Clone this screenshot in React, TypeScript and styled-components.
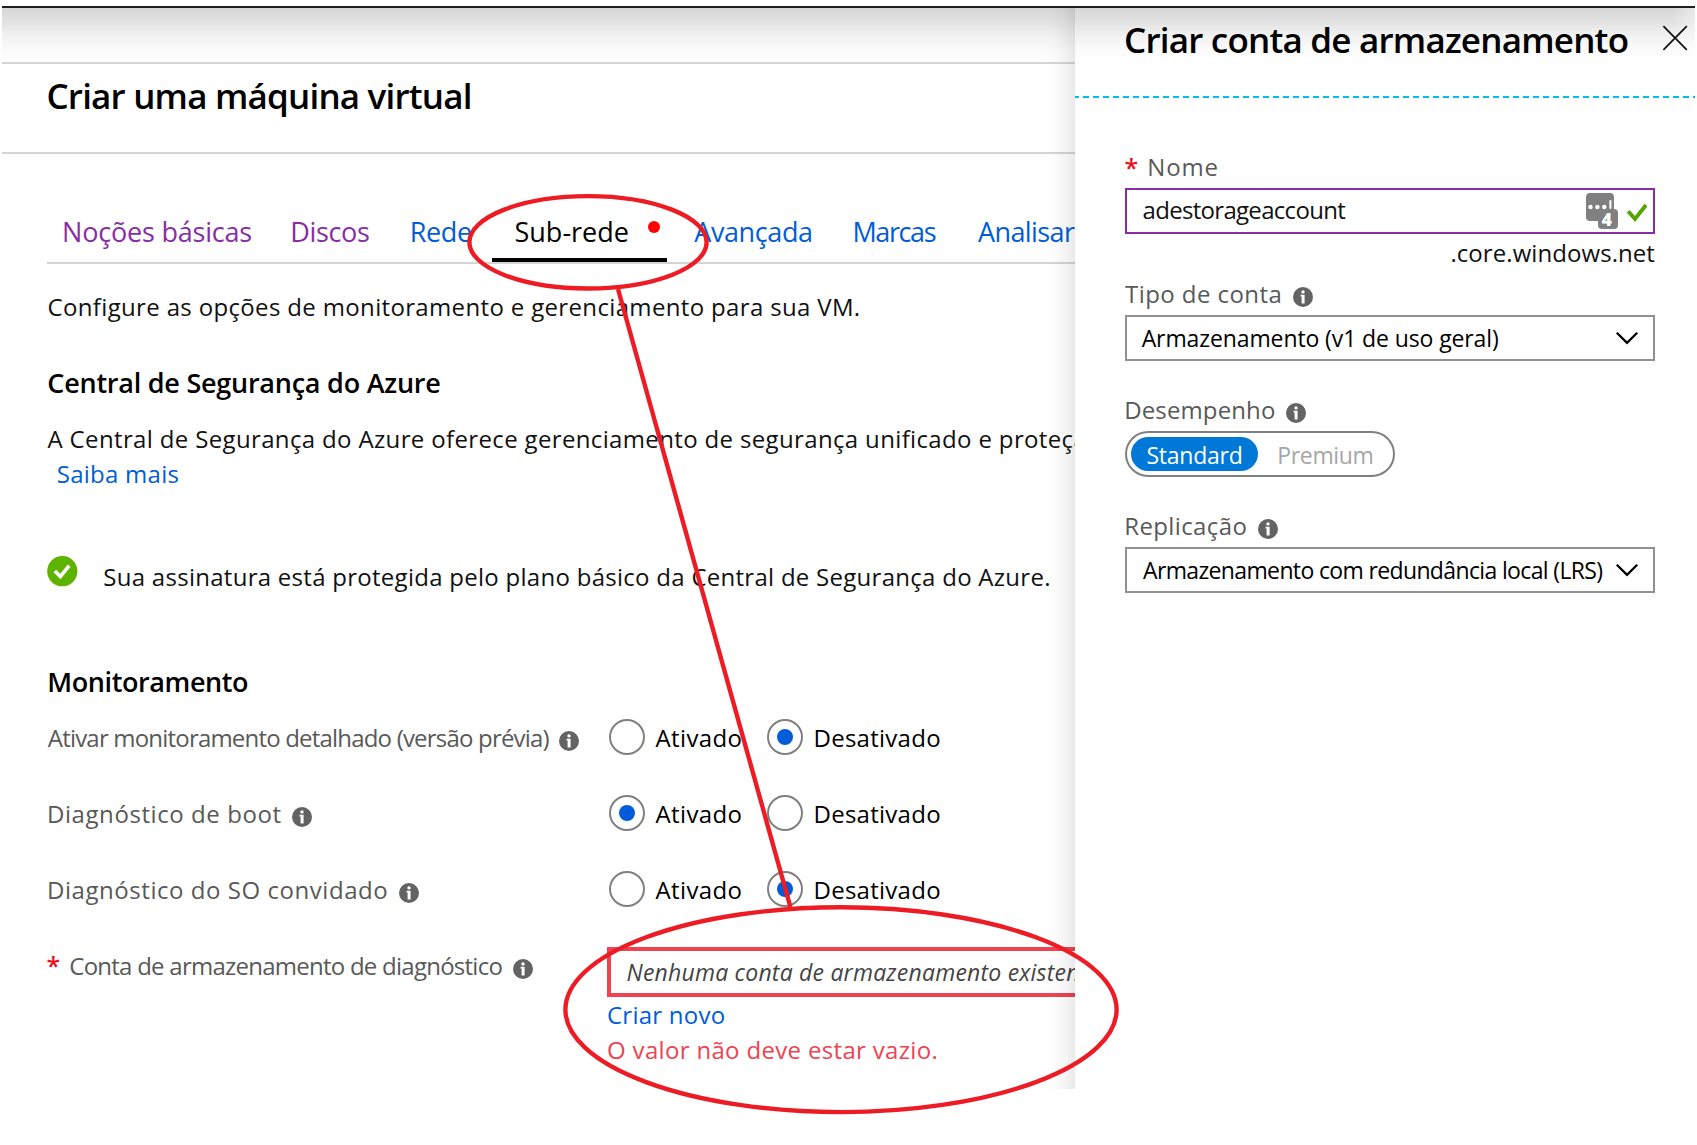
import React from 'react';
import styled, { createGlobalStyle, css } from 'styled-components';

const c = {
  ink: '#111111',
  label: '#595959',
  link: '#015cda',
  visited: '#882da5',
  rule: '#d4d4d4',
  error: '#ef4352',
  azure: '#0078d7',
  mark: '#ed1c24',
};

const GlobalStyle = createGlobalStyle`
  * { box-sizing: border-box; }
  body {
    margin: 0;
    background: #fff;
    color: ${c.ink};
    font-family: 'Open Sans', 'Noto Sans', sans-serif;
    font-size: 24px;
  }
  h1, h2, p { margin: 0; }
`;

type Tracked = { $track?: number };
const tracking = css<Tracked>`
  letter-spacing: ${(p) => p.$track ?? 0}px;
  white-space: nowrap;
`;

const Page = styled.div`
  position: relative;
  width: 1697px;
  height: 1145px;
  padding: 6px 2px 0;
  overflow: hidden;
`;

const TopLine = styled.div`
  height: 2px;
  background: #1f1f1f;
`;

const Columns = styled.div`
  display: grid;
  grid-template-columns: 1073px 620px;
  height: 1137px;
`;

const TopShade = styled.div`
  position: absolute;
  top: 8px;
  left: 2px;
  right: 2px;
  height: 54px;
  background: linear-gradient(
    rgba(0, 0, 0, 0.155),
    rgba(0, 0, 0, 0.115) 25%,
    rgba(0, 0, 0, 0.055) 50%,
    rgba(0, 0, 0, 0.015) 78%,
    rgba(0, 0, 0, 0)
  );
  mask-image: linear-gradient(to left, rgba(0, 0, 0, 0.6), #000 22px);
  pointer-events: none;
`;

const Blade = styled.main`
  position: relative;
  overflow: hidden;
`;

const BladeShade = styled.div`
  position: absolute;
  top: 0;
  right: 0;
  width: 30px;
  height: 1081px;
  background: linear-gradient(
    to left,
    rgba(0, 0, 0, 0.085),
    rgba(0, 0, 0, 0.04) 35%,
    rgba(0, 0, 0, 0.012) 70%,
    rgba(0, 0, 0, 0)
  );
`;

const Strip = styled.div`
  height: 56px;
  border-bottom: 2px solid ${c.rule};
`;

const BladeHeader = styled.header`
  height: 90px;
  padding: 8px 0 0 44.5px;
  border-bottom: 2px solid ${c.rule};
`;

const Title = styled.h1<Tracked>`
  color: #000;
  font-size: 35px;
  font-weight: 600;
  line-height: 48px;
  ${tracking}
`;

const Content = styled.div`
  width: 1300px;
  padding: 57px 0 0 45px;
`;

const Tabs = styled.nav`
  display: flex;
  height: 53px;
  border-bottom: 2px solid ${c.rule};
`;

const Tab = styled.a<Tracked & { $tone: string; $width: number; $lead: number; $active?: boolean }>`
  display: flex;
  width: ${(p) => p.$width}px;
  height: 51px;
  padding-left: ${(p) => p.$lead}px;
  border-bottom: 4px solid ${(p) => (p.$active ? '#000' : 'transparent')};
  color: ${(p) => p.$tone};
  font-size: 27px;
  line-height: 42px;
  ${tracking}
`;

const Dot = styled.span`
  width: 12px;
  height: 12px;
  margin: 10px 0 0 19px;
  border-radius: 50%;
  background: #f00;
`;

const Para = styled.p<Tracked & { $top: number }>`
  margin: ${(p) => p.$top}px 0 0 0.5px;
  line-height: 34px;
  ${tracking}
`;

const Heading = styled.h2<Tracked & { $top: number }>`
  margin: ${(p) => p.$top}px 0 0 0.3px;
  color: #000;
  font-size: 27px;
  font-weight: 600;
  line-height: 36px;
  ${tracking}
`;

const Link = styled.a<Tracked>`
  color: ${c.link};
  ${tracking}
`;

const Indent = styled.span`
  display: inline-block;
  width: 9.3px;
`;

const Status = styled.div`
  display: flex;
  gap: 25.3px;
  height: 38px;
  margin-top: 65.5px;
`;

const StatusText = styled.p<Tracked>`
  padding-top: 3.5px;
  line-height: 34px;
  ${tracking}
`;

const Settings = styled.div`
  display: flex;
  flex-direction: column;
  gap: 40px;
  margin-top: 19px;
`;

const Setting = styled.div`
  display: grid;
  grid-template-columns: 560px 1fr;
  height: 36px;
`;

const Label = styled.div<Tracked>`
  display: flex;
  color: ${c.label};
  line-height: 37px;
  ${tracking}
`;

const InfoSvg = styled.svg<{ $top: number }>`
  flex: none;
  width: 20px;
  height: 20px;
  margin: ${(p) => p.$top}px 0 0 10.6px;
`;

const Star = styled.span`
  width: 22.8px;
  margin-left: -0.5px;
  color: #e81123;
  font-size: 25px;
  font-weight: 600;
`;

const Options = styled.div`
  display: flex;
  padding-left: 2px;
`;

const Option = styled.label<Tracked>`
  display: flex;
  gap: 10.5px;
  width: 158px;
  color: #000;
  line-height: 37px;
  ${tracking}
`;

const Radio = styled.span<{ $on: boolean }>`
  display: grid;
  flex: none;
  place-items: center;
  width: 36px;
  height: 36px;
  border: 2px solid #808080;
  border-radius: 50%;
  &::after {
    content: '';
    width: 16px;
    height: 16px;
    border-radius: 50%;
    background: ${(p) => (p.$on ? c.link : 'transparent')};
  }
`;

const Account = styled.div`
  line-height: 35px;
`;

const InvalidField = styled.div<Tracked>`
  height: 50px;
  padding-left: 15.5px;
  border: 4px solid ${c.error};
  color: #444;
  font-size: 23px;
  font-style: italic;
  line-height: 42px;
  ${tracking}
`;

const ErrorText = styled.p<Tracked>`
  color: ${c.error};
  line-height: 35px;
  ${tracking}
`;

const Panel = styled.aside`
  background: #fff;
`;

const PanelHeader = styled.header`
  display: flex;
  justify-content: space-between;
  height: 90px;
  padding: 8px 7px 0 49px;
  background: repeating-linear-gradient(to right, #00bcf2 0 6px, transparent 6px 10px) -2px 88px / 630px 2px no-repeat;
`;

const CloseSvg = styled.svg`
  width: 26px;
  height: 26px;
  margin-top: 9px;
`;

const Form = styled.div`
  display: flex;
  flex-direction: column;
  padding: 52px 40px 0 50px;
`;

const Field = styled.div<{ $gap: number }>`
  height: 84px;
  margin-bottom: ${(p) => p.$gap}px;
`;

const FieldLabel = styled(Label)<{ $shift?: number }>`
  height: 38px;
  margin-left: ${(p) => p.$shift ?? 0}px;
  line-height: 34px;
`;

const Box = styled.div<Tracked & { $border: string; $lead: number }>`
  display: flex;
  align-items: center;
  height: 46px;
  padding: 0 ${(p) => p.$lead}px;
  border: 2px solid ${(p) => p.$border};
  color: #000;
  line-height: 42px;
  ${tracking}
`;

const NameBox = styled(Box)`
  padding-right: 5px;
  color: ${c.ink};
  line-height: 40px;
`;

const SelectBox = styled(Box)`
  justify-content: space-between;
  padding-right: 14.5px;
  font-size: 23px;
`;

const FillText = styled.span`
  flex: 1;
  margin-top: -2px;
`;

const Suffix = styled.p<Tracked>`
  height: 43px;
  padding-top: 2px;
  line-height: 34px;
  text-align: right;
  ${tracking}
`;

const Toggle = styled.div`
  display: flex;
  width: 270px;
  height: 46px;
  padding: 4px;
  border: 2px solid #808080;
  border-radius: 23px;
  font-size: 23px;
  line-height: 36px;
`;

const Choice = styled.span<Tracked & { $on?: boolean }>`
  width: 127px;
  height: 34px;
  padding-left: ${(p) => (p.$on ? 15.5 : 19.3)}px;
  border-radius: 17px;
  background: ${(p) => (p.$on ? c.azure : 'transparent')};
  color: ${(p) => (p.$on ? '#fff' : '#a6a6a6')};
  ${tracking}
`;

const Annotations = styled.svg`
  position: absolute;
  inset: 0;
  width: 1697px;
  height: 1145px;
  pointer-events: none;
`;

const Info = ({ top = 12 }: { top?: number }) => (
  <InfoSvg viewBox="0 0 20 20" $top={top}>
    <circle cx="10" cy="10" r="10" fill="#636363" />
    <circle cx="10" cy="4.9" r="1.7" fill="#fff" />
    <path d="M7.6 7.8H11.6V16.6H8.6V9.6H7.6Z" fill="#fff" />
  </InfoSvg>
);

const Chevron = () => (
  <svg width="24" height="14" viewBox="0 0 24 14">
    <path d="M1.8 1.8L12 11.8L22.2 1.8" fill="none" stroke="#000" strokeWidth="2.3" />
  </svg>
);

const Approved = () => (
  <svg width="31" height="31" viewBox="0 0 31 31">
    <circle cx="15.3" cy="15.2" r="15.1" fill="#5db300" />
    <path d="M7.8 15L13.3 20.6L22.2 9.6" fill="none" stroke="#fff" strokeWidth="3.6" />
  </svg>
);

const PasswordBadge = () => (
  <svg width="62" height="38" viewBox="0 0 62 38">
    <rect x="0" y="1" width="28" height="28" rx="4" fill="#808080" />
    <rect x="12" y="17" width="20" height="20" rx="4" fill="#808080" />
    <g fill="#fff">
      <circle cx="4.5" cy="15" r="2.2" />
      <circle cx="11.4" cy="15" r="2.2" />
      <circle cx="18.3" cy="15" r="2.2" />
      <rect x="23.4" y="8.2" width="2" height="8.6" />
    </g>
    <text x="21" y="34" fill="#fff" textAnchor="middle" fontSize="17.5" fontWeight="800" fontFamily="'Open Sans', sans-serif" letterSpacing="0">
      4
    </text>
    <path d="M42.2 19.2L49 27L60 13" fill="none" stroke="#57a300" strokeWidth="3.8" />
  </svg>
);

const tabs = [
  { text: 'Noções básicas', tone: c.visited, width: 228, lead: 15, track: -0.2 },
  { text: 'Discos', tone: c.visited, width: 120, lead: 15.2, track: -0.35 },
  { text: 'Rede', tone: c.link, width: 97, lead: 14.8, track: -0.4 },
  { text: 'Sub-rede', tone: '#000', width: 175, lead: 22.5, track: 0, active: true },
  { text: 'Avançada', tone: c.link, width: 159, lead: 27.2, track: -0.38 },
  { text: 'Marcas', tone: c.link, width: 125, lead: 26.5, track: -1.41 },
  { text: 'Analisar', tone: c.link, width: 150, lead: 27, track: -0.59 },
];

const settings = [
  { text: 'Ativar monitoramento detalhado (versão prévia)', track: -0.807, shift: 0.8, on: false },
  { text: 'Diagnóstico de boot', track: 0.57, shift: 0, on: true },
  { text: 'Diagnóstico do SO convidado', track: 0.55, shift: 0, on: false },
];

const Nudge = styled.span<{ $by: number }>`
  margin-left: ${(p) => p.$by}px;
`;

export default function App() {
  return (
    <>
      <GlobalStyle />
      <Page>
        <TopLine />
        <Columns>
          <Blade>
            <Strip />
            <BladeHeader>
              <Title $track={-0.81}>Criar uma máquina virtual</Title>
            </BladeHeader>
            <Content>
              <Tabs>
                {tabs.map((t) => (
                  <Tab key={t.text} $tone={t.tone} $width={t.width} $lead={t.lead} $track={t.track} $active={t.active}>
                    {t.text}
                    {t.active && <Dot />}
                  </Tab>
                ))}
              </Tabs>
              <Para $top={25.5} $track={0.345}>
                Configure as opções de monitoramento e gerenciamento para sua VM.
              </Para>
              <Heading $top={41} $track={-0.24}>Central de Segurança do Azure</Heading>
              <Para $top={21} $track={0.353}>
                A Central de Segurança do Azure oferece gerenciamento de segurança unificado e proteção
              </Para>
              <Para $top={1}>
                <Indent />
                <Link $track={0.25}>Saiba mais</Link>
              </Para>
              <Status>
                <Approved />
                <StatusText $track={0.275}>
                  Sua assinatura está protegida pelo plano básico da Central de Segurança do Azure.
                </StatusText>
              </Status>
              <Heading $top={70} $track={-0.41}>Monitoramento</Heading>
              <Settings>
                {settings.map((s) => (
                  <Setting key={s.text}>
                    <Label $track={s.track}>
                      <Nudge $by={s.shift}>{s.text}</Nudge>
                      <Info />
                    </Label>
                    <Options>
                      <Option $track={0.367}>
                        <Radio $on={s.on} />
                        Ativado
                      </Option>
                      <Option $track={0.26}>
                        <Radio $on={!s.on} />
                        Desativado
                      </Option>
                    </Options>
                  </Setting>
                ))}
                <Setting>
                  <Label $track={-0.751}>
                    <Star>*</Star>
                    <span>Conta de armazenamento de diagnóstico</span>
                    <Info />
                  </Label>
                  <Account>
                    <InvalidField $track={0.21}>Nenhuma conta de armazenamento existente</InvalidField>
                    <Link $track={0.24}>Criar novo</Link>
                    <ErrorText $track={0.33}>O valor não deve estar vazio.</ErrorText>
                  </Account>
                </Setting>
              </Settings>
            </Content>
            <BladeShade />
          </Blade>
          <Panel>
            <PanelHeader>
              <Title $track={-0.79}>Criar conta de armazenamento</Title>
              <CloseSvg viewBox="0 0 26 26">
                <path d="M1.4 1.2L24.8 24.8M24.8 1.2L1.4 24.8" fill="none" stroke="#111" strokeWidth="1.7" />
              </CloseSvg>
            </PanelHeader>
            <Form>
              <Field $gap={0}>
                <FieldLabel $track={0.85}>
                  <Star>*</Star>
                  Nome
                </FieldLabel>
                <NameBox $border={c.visited} $lead={15.5} $track={-0.693}>
                  <FillText>adestorageaccount</FillText>
                  <PasswordBadge />
                </NameBox>
              </Field>
              <Suffix $track={0.071}>.core.windows.net</Suffix>
              <Field $gap={32}>
                <FieldLabel $track={0.439}>
                  Tipo de conta
                  <Info top={10} />
                </FieldLabel>
                <SelectBox $border="#919191" $lead={14.7} $track={-0.108}>
                  Armazenamento (v1 de uso geral)
                  <Chevron />
                </SelectBox>
              </Field>
              <Field $gap={32}>
                <FieldLabel $shift={-0.8} $track={0.12}>
                  Desempenho
                  <Info top={10} />
                </FieldLabel>
                <Toggle>
                  <Choice $on $track={-0.25}>Standard</Choice>
                  <Choice $track={-0.35}>Premium</Choice>
                </Toggle>
              </Field>
              <Field $gap={0}>
                <FieldLabel $shift={-0.8} $track={0.38}>
                  Replicação
                  <Info top={10} />
                </FieldLabel>
                <SelectBox $border="#919191" $lead={16} $track={-0.642}>
                  Armazenamento com redundância local (LRS)
                  <Chevron />
                </SelectBox>
              </Field>
            </Form>
          </Panel>
        </Columns>
        <TopShade />
        <Annotations viewBox="0 0 1697 1145">
          <g fill="none" stroke={c.mark} strokeWidth="4.4">
            <ellipse cx="588" cy="242.3" rx="118.6" ry="46.2" />
            <path d="M618 289L790.4 907" />
            <ellipse cx="841" cy="1009.7" rx="275.6" ry="102.4" />
          </g>
        </Annotations>
      </Page>
    </>
  );
}
